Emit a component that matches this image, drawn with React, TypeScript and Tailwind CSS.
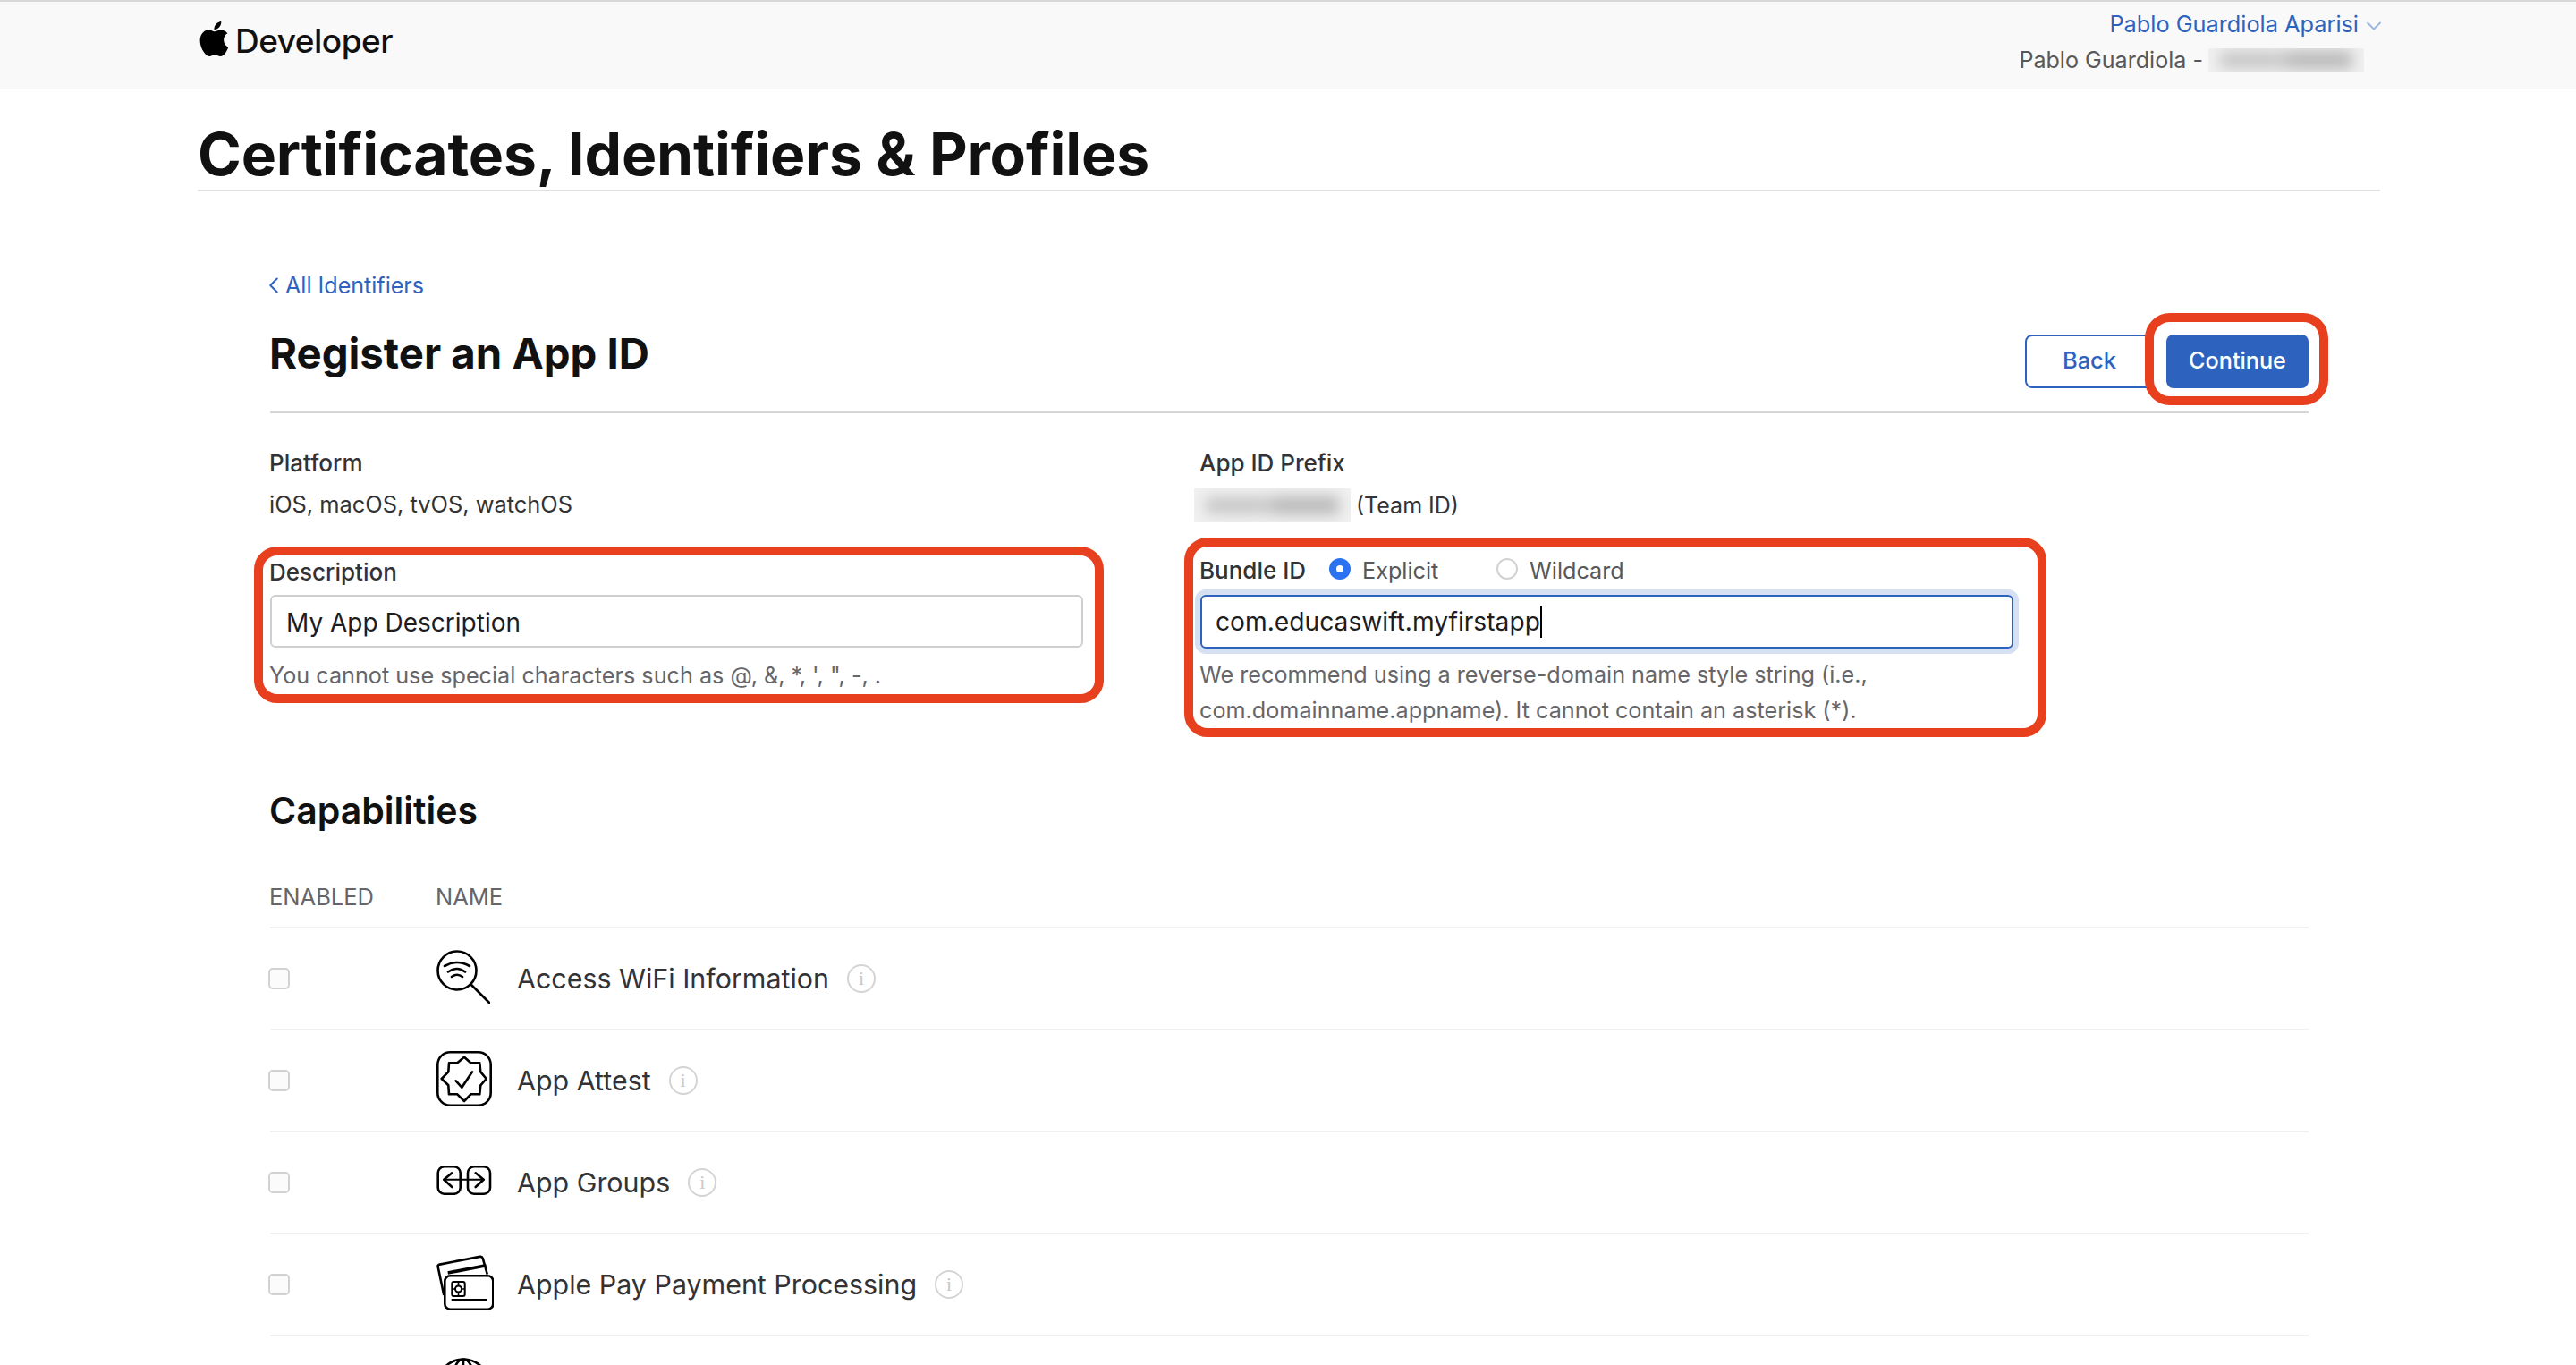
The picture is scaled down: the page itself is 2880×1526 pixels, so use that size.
import { ChevronDown, ChevronLeft } from 'lucide-react';
import { SiApple } from 'react-icons/si';

function WifiIcon() {
  return (
    <svg width="60" height="60" viewBox="0 0 60 60" fill="none" stroke="#000" strokeWidth="2.6" strokeLinecap="round">
      <circle cx="23" cy="23" r="21.5" />
      <path d="M39 39 59 59" />
      <path d="M9 18Q23 10 37 18" />
      <path d="M13 24.5Q23 17.5 32 24.5" />
      <path d="M17 30Q23 25.5 29 30" />
    </svg>
  );
}

function AttestIcon() {
  return (
    <svg width="62" height="62" viewBox="0 0 62 62" fill="none" stroke="#000" strokeWidth="2.6" strokeLinejoin="round" strokeLinecap="round">
      <rect x="1.3" y="1.3" width="59.4" height="59.4" rx="14" />
      <path d="M31 6.7 38.3 13.3H48.3L49.3 23.3 55.7 31 49.3 38.3 48.3 48.3H38.3L31 56 23.3 48.3H14L13.3 38.3 5.7 31 13.3 23.3 14 13.3H23.3Z" />
      <path d="M21.7 33.3 28.3 40.7 40 23.3" />
    </svg>
  );
}

function GroupsIcon() {
  return (
    <svg width="62" height="34" viewBox="0 0 62 34" fill="none" stroke="#000" strokeWidth="2.6" strokeLinecap="round" strokeLinejoin="round">
      <rect x="1.7" y="1.3" width="25" height="30.4" rx="7" />
      <rect x="35" y="1.3" width="25" height="30.4" rx="7" />
      <path d="M8.3 15.7H52.7" strokeWidth="2" />
      <path d="M17.3 8.3 8.3 15.7 17.3 24" />
      <path d="M43.7 8.3 52.7 15.7 43.7 24" />
    </svg>
  );
}

function PayIcon() {
  return (
    <svg width="64" height="62" viewBox="0 0 64 62" fill="none" stroke="#000" strokeWidth="2.6" strokeLinejoin="round">
      <path d="M8.3 45 1.7 13.5Q1.2 11.2 3.6 10.6L48.5 1.9Q51 1.4 51.8 3.8L56.8 21.7" />
      <path d="M12.7 20 55.5 11.7" strokeWidth="3.6" />
      <rect x="9.3" y="23.3" width="54" height="37.4" rx="6" fill="#fff" />
      <rect x="17.3" y="30" width="14.4" height="16" rx="2" strokeWidth="2" />
      <circle cx="24.5" cy="38" r="3.5" strokeWidth="2" />
      <path d="M24.5 30V34.5M24.5 41.5V46M17.3 38H21M28 38H31.7" strokeWidth="1.6" />
      <path d="M16.7 50.3H56" strokeWidth="2.6" />
    </svg>
  );
}

function GlobeIcon() {
  return (
    <svg width="60" height="60" viewBox="0 0 60 60" fill="none" stroke="#000" strokeWidth="2.6">
      <circle cx="30" cy="30" r="28.5" />
      <ellipse cx="30" cy="30" rx="13" ry="28.5" />
      <path d="M30 1.5V58.5M1.5 30H58.5M6 15H54M6 45H54" />
    </svg>
  );
}

function BlurredText({ className }: { className: string }) {
  return (
    <div className={`overflow-hidden flex items-center ${className}`}>
      <div className="flex w-full items-center justify-center gap-[2px] blur-[8px]">
        <div className="h-[18px] w-[40%] bg-[#c4c4c4]" />
        <div className="h-[20px] w-[44%] bg-[#b8b8b8]" />
      </div>
    </div>
  );
}

function Marker({ className }: { className: string }) {
  return <div className={`absolute border-[10px] border-[#e8401f] pointer-events-none ${className}`} />;
}

function InfoDot() {
  return (
    <span className="flex h-[32px] w-[32px] shrink-0 items-center justify-center rounded-full border-2 border-[#d4d4d4] bg-white font-['Liberation_Serif',serif] text-[22px] leading-none text-[#c8c8c8]">
      i
    </span>
  );
}

function CapabilityRow({ name, icon }: { name?: string; icon: React.ReactNode }) {
  return (
    <div className="flex h-[114px] items-center border-b-2 border-[#f0f0f0]">
      <div className="w-[186px]">
        <div className="-ml-[2px] h-[24px] w-[24px] rounded-[5px] border-2 border-[#d2d2d2] bg-[#fbfbfb]" />
      </div>
      <div className="flex h-[64px] w-[90px] -translate-y-[2px] items-center">{icon}</div>
      {name && (
        <>
          <span className="text-[30.4px] leading-[40px] text-[#333336]">{name}</span>
          <span className="ml-[20px]">
            <InfoDot />
          </span>
        </>
      )}
    </div>
  );
}

export default function App() {
  return (
    <div className="h-[1526px] overflow-hidden bg-white font-[Inter,sans-serif] text-[#333336]">
      {/* Top bar */}
      <header className="h-[100px] border-t-2 border-[#d8d8d8] bg-[#f9f9f9]">
        <div className="mx-[219px] flex justify-between">
          <div className="flex items-center gap-[4px] pt-[11px] pl-[1px]">
            <SiApple size={39} color="#000" className="-mt-[12px]" />
            <span className="-translate-y-[3px] text-[37px] leading-[44px] font-medium tracking-[-0.5px] text-[#111]">Developer</span>
          </div>
          <div className="flex flex-col items-end">
            <div className="-mr-[7px] flex items-center gap-[3px] pt-[7px]">
              <span className="text-[25.3px] leading-[36px] text-[#2d63bf]">Pablo Guardiola Aparisi</span>
              <ChevronDown size={28} color="#9db7e0" strokeWidth={1.7} className="mt-[4px]" />
            </div>
            <div className="mr-[18px] flex items-center gap-[6px] pt-[4px]">
              <span className="text-[25.1px] leading-[36px] text-[#58585a]">Pablo Guardiola -</span>
              <BlurredText className="h-[26px] w-[174px] bg-[#f1f1f1]" />
            </div>
          </div>
        </div>
      </header>

      <main className="ml-[221px] w-[2440px]">
        <h1 className="mt-[32px] h-[82px] border-b-2 border-[#e0e0e0] text-[66px] leading-[80px] font-bold tracking-[-0.16px] text-[#111]">
          Certificates, Identifiers &amp; Profiles
        </h1>

        <div className="ml-[81px] w-[2279px]">
          <a className="mt-[87px] flex items-center text-[25.1px] leading-[36px] text-[#2d63bf]">
            <ChevronLeft size={30} strokeWidth={1.6} className="-mr-[2px] -ml-[11px]" />
            All Identifiers
          </a>

          {/* Title row with actions */}
          <div className="mt-[30px] flex h-[95px] items-start justify-between border-b-2 border-[#d6d6d6]">
            <h2 className="-ml-px text-[47.3px] leading-[56px] font-bold text-[#111]">Register an App ID</h2>
            <div className="mt-[7px] flex gap-[14px]">
              <button className="h-[60px] w-[144px] rounded-[8px] border-2 border-[#2d63bf] bg-white pb-[2px] text-[25.5px] font-medium text-[#2d63bf]">
                Back
              </button>
              <div className="relative">
                <button className="h-[60px] w-[159px] rounded-[8px] bg-[#2d63bf] pb-[1px] text-[25.2px] font-medium text-white">
                  Continue
                </button>
                <Marker className="-top-[24px] -bottom-[19px] -left-[24px] -right-[22px] rounded-[28px]" />
              </div>
            </div>
          </div>

          {/* Form fields */}
          <div className="mt-[38px] grid grid-cols-[909px_909px] gap-x-[131px]">
            <div>
              <div className="-ml-px text-[26px] leading-[36px] font-medium">Platform</div>
              <div className="-ml-px mt-[10px] text-[25.4px] leading-[36px]">iOS, macOS, tvOS, watchOS</div>
              <div className="relative mt-[40px]">
                <div className="-ml-px text-[26px] leading-[36px] font-medium">Description</div>
                <div className="mt-[7px] flex h-[59px] items-center rounded-[6px] border-2 border-[#cfcfcf] pt-[2px] pl-[16px] text-[28px] text-[#1d1d1f]">
                  My App Description
                </div>
                <div className="-ml-px mt-[11px] text-[25.2px] leading-[40px] text-[#66666a]">
                  You cannot use special characters such as @, &amp;, *, ', ", -, .
                </div>
                <Marker className="-top-[11px] -bottom-[11px] -left-[18px] -right-[23px] rounded-[26px]" />
              </div>
            </div>

            <div>
              <div className="-ml-px text-[26px] leading-[36px] font-medium">App ID Prefix</div>
              <div className="mt-[10px] flex items-center gap-[6px] text-[25px] leading-[36px]">
                <BlurredText className="-ml-[7px] h-[38px] w-[175px] bg-[#f1f1f1]" />
                (Team ID)
              </div>
              <div className="relative mt-[36px]">
                <div className="flex items-center text-[25.2px] leading-[36px]">
                  <span className="-ml-px w-[145px] text-[26px] font-medium">Bundle ID</span>
                  <span className="-mt-[4px] flex h-[24px] w-[24px] items-center justify-center rounded-full bg-[#2a72f0]">
                    <span className="h-[8px] w-[8px] rounded-full bg-white" />
                  </span>
                  <span className="ml-[13px] w-[150px] text-[#58585a]">Explicit</span>
                  <span className="-mt-[4px] h-[24px] w-[24px] rounded-full border-2 border-[#d2d2d2] bg-white" />
                  <span className="ml-[13px] text-[#58585a]">Wildcard</span>
                </div>
                <div className="mt-[9px] flex h-[60px] items-center rounded-[6px] border-2 border-[#2d63bf] pl-[15px] text-[28.2px] text-[#1d1d1f] shadow-[0_0_0_6px_#d5e0f2]">
                  com.educaswift.myfirstapp
                  <span className="h-[36px] w-[2px] bg-black" />
                </div>
                <div className="-ml-px mt-[9px] text-[25.2px] leading-[40px] text-[#66666a]">
                  We recommend using a reverse-domain name style string (i.e.,
                  <br />
                  com.domainname.appname). It cannot contain an asterisk (*).
                </div>
                <Marker className="-top-[19px] -bottom-[10px] -left-[18px] -right-[37px] rounded-[26px]" />
              </div>
            </div>
          </div>

          {/* Capabilities table */}
          <h3 className="-ml-px mt-[66px] text-[41px] leading-[52px] font-semibold text-[#111]">Capabilities</h3>
          <div className="mt-[53px] flex border-b-2 border-[#f0f0f0] pb-[15px] text-[25.5px] leading-[36px] text-[#66666a]">
            <span className="-ml-px w-[186px]">ENABLED</span>
            <span>NAME</span>
          </div>
          <CapabilityRow name="Access WiFi Information" icon={<WifiIcon />} />
          <CapabilityRow name="App Attest" icon={<AttestIcon />} />
          <CapabilityRow name="App Groups" icon={<GroupsIcon />} />
          <CapabilityRow name="Apple Pay Payment Processing" icon={<PayIcon />} />
          <CapabilityRow icon={<GlobeIcon />} />
        </div>
      </main>
    </div>
  );
}
